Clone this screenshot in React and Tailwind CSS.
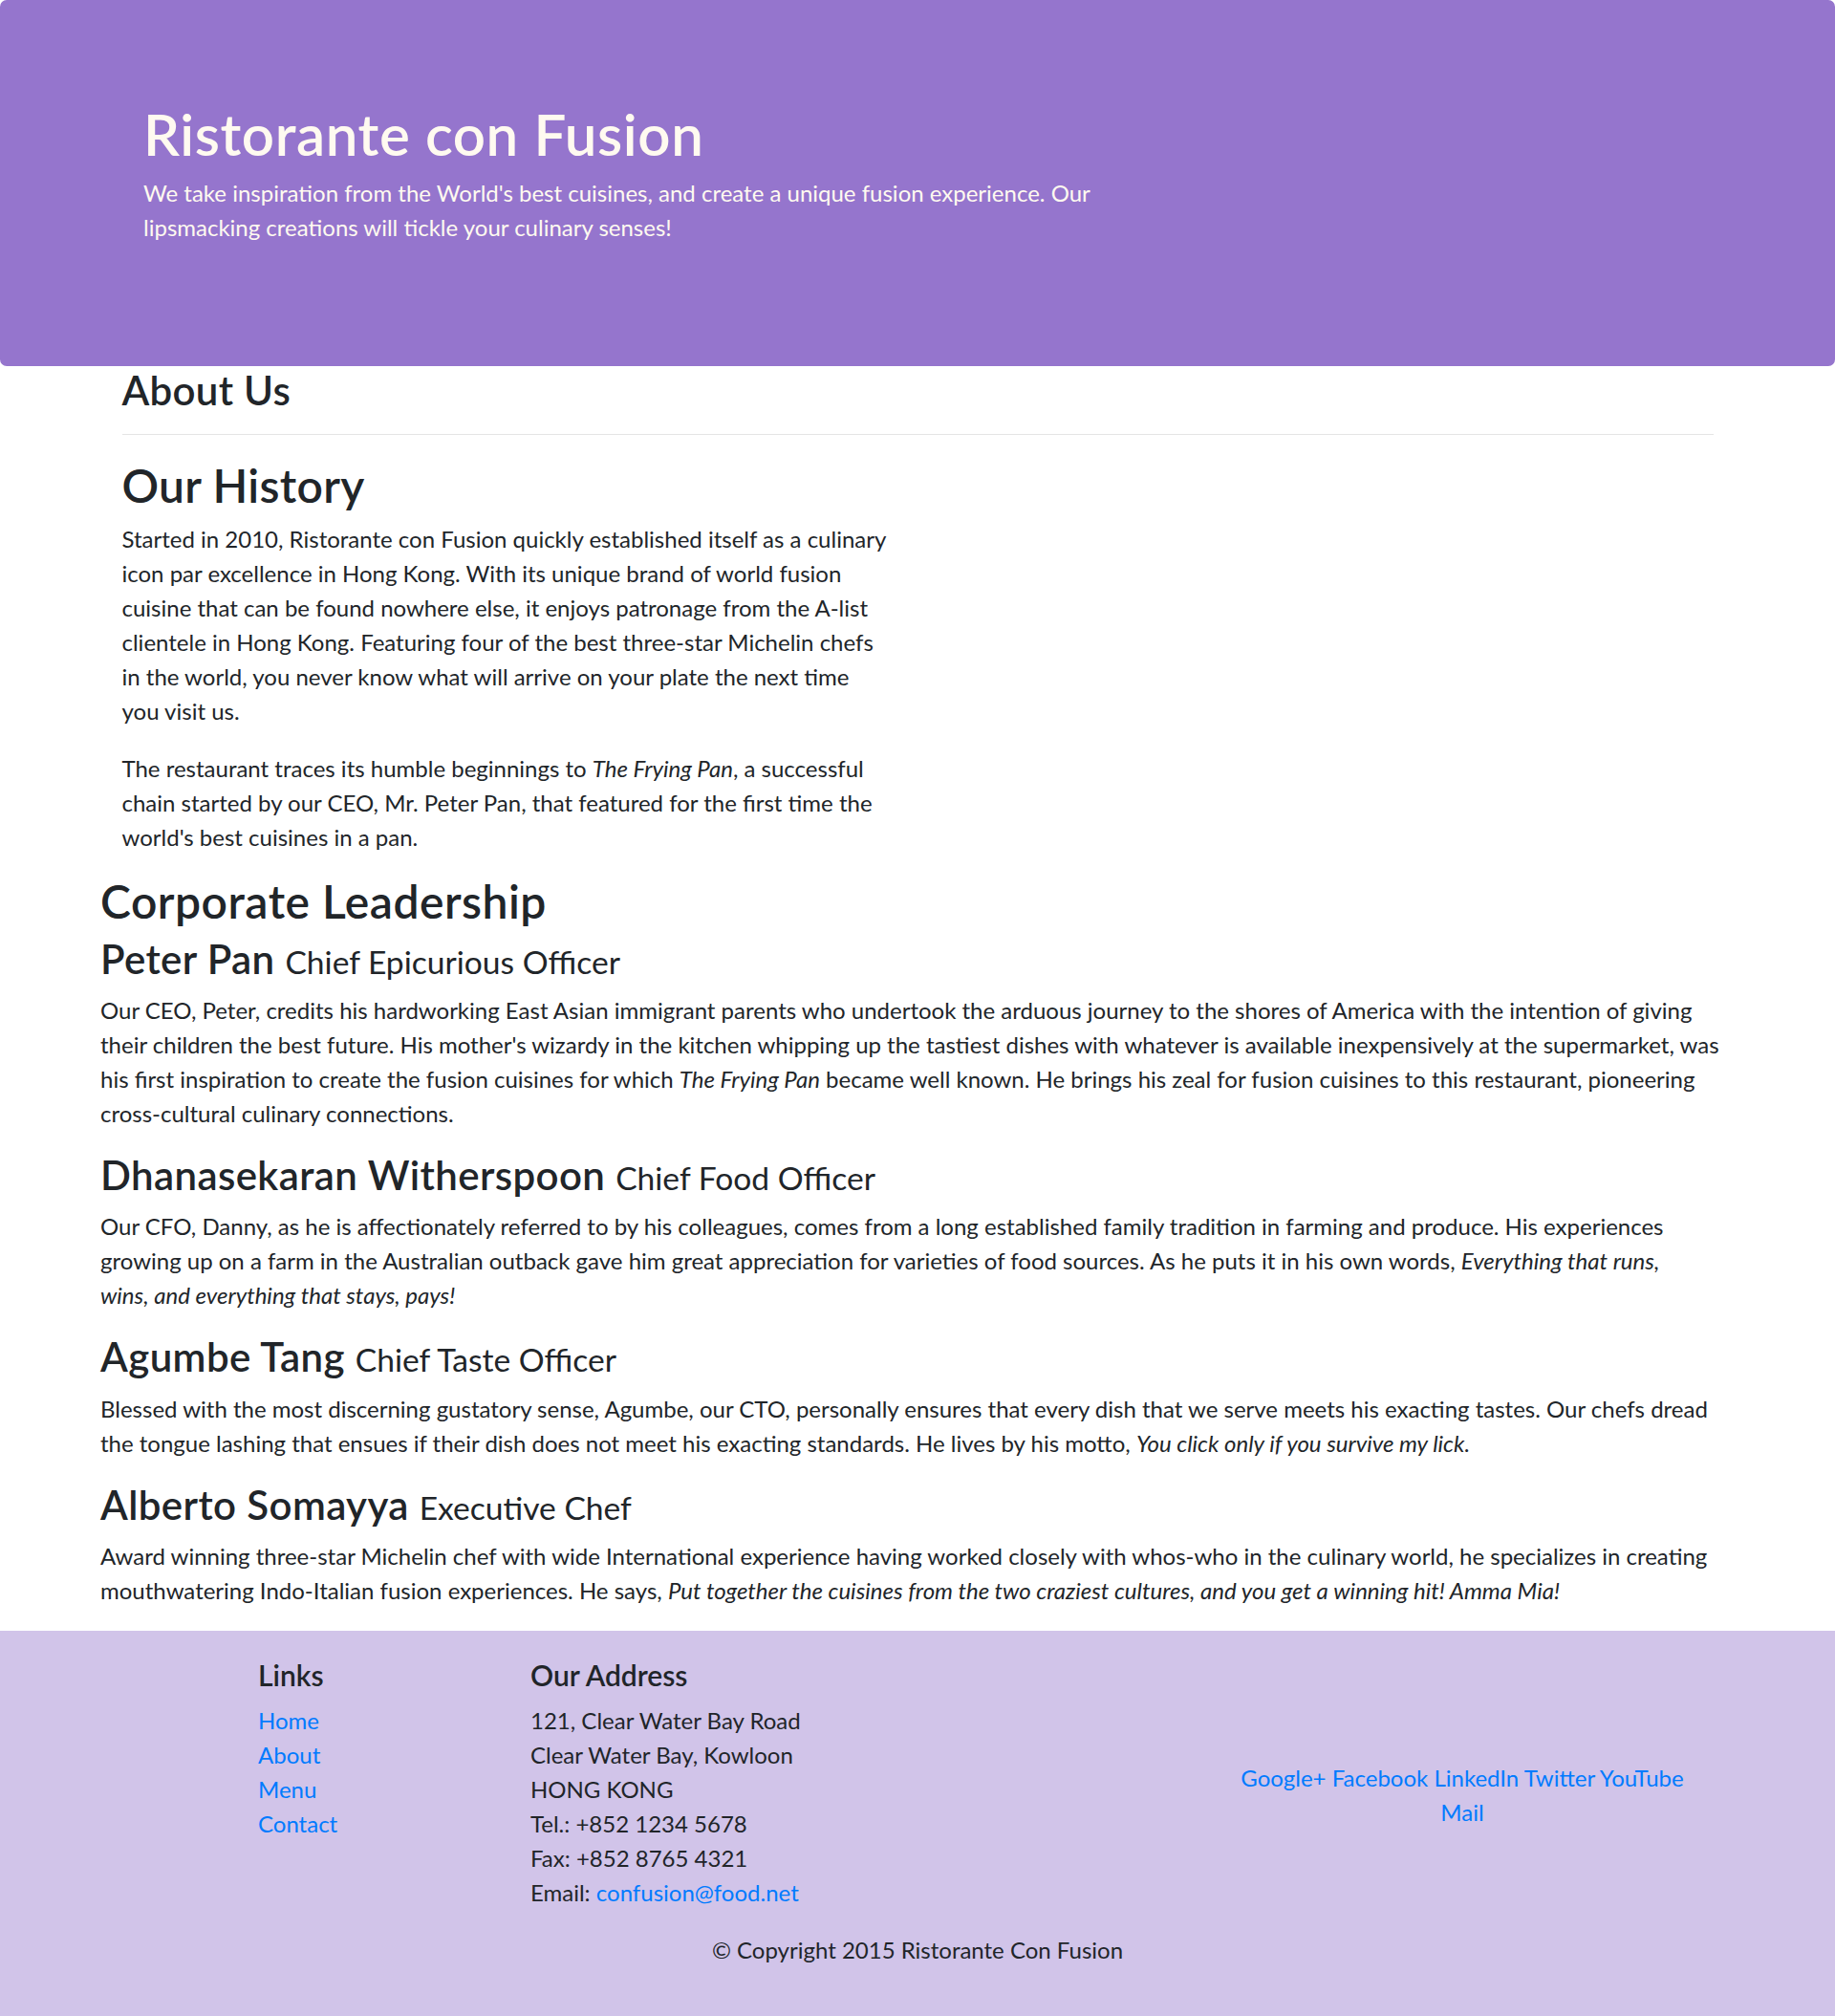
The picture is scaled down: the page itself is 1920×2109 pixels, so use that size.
import React from "react";

const leaders = [
  {
    name: "Peter Pan",
    title: "Chief Epicurious Officer",
    text: (
      <>
        Our CEO, Peter, credits his hardworking East Asian immigrant parents who undertook the arduous journey to the
        shores of America with the intention of giving their children the best future. His mother's wizardy in the
        kitchen whipping up the tastiest dishes with whatever is available inexpensively at the supermarket, was his
        first inspiration to create the fusion cuisines for which <em>The Frying Pan</em> became well known. He brings
        his zeal for fusion cuisines to this restaurant, pioneering cross-cultural culinary connections.
      </>
    ),
  },
  {
    name: "Dhanasekaran Witherspoon",
    title: "Chief Food Officer",
    narrow: true,
    text: (
      <>
        Our CFO, Danny, as he is affectionately referred to by his colleagues, comes from a long established family
        tradition in farming and produce. His experiences growing up on a farm in the Australian outback gave him great
        appreciation for varieties of food sources. As he puts it in his own words,{" "}
        <em>Everything that runs, wins, and everything that stays, pays!</em>
      </>
    ),
  },
  {
    name: "Agumbe Tang",
    title: "Chief Taste Officer",
    text: (
      <>
        Blessed with the most discerning gustatory sense, Agumbe, our CTO, personally ensures that every dish that we
        serve meets his exacting tastes. Our chefs dread the tongue lashing that ensues if their dish does not meet his
        exacting standards. He lives by his motto, <em>You click only if you survive my lick.</em>
      </>
    ),
  },
  {
    name: "Alberto Somayya",
    title: "Executive Chef",
    text: (
      <>
        Award winning three-star Michelin chef with wide International experience having worked closely with whos-who
        in the culinary world, he specializes in creating mouthwatering Indo-Italian fusion experiences. He says,{" "}
        <em>Put together the cuisines from the two craziest cultures, and you get a winning hit! Amma Mia!</em>
      </>
    ),
  },
];

const links = ["Home", "About", "Menu", "Contact"];
const socials = ["Google+", "Facebook", "LinkedIn", "Twitter", "YouTube", "Mail"];

export default function App() {
  return (
    <div className="min-h-screen bg-white text-[#212529] font-[Lato,sans-serif] text-[24px] leading-[36px]">
      {/* Jumbotron */}
      <header className="h-[383px] rounded-[7px] bg-[#9575cd] pt-[104px] pl-[150px] text-[#fffaf0]">
        <div className="w-[1095px]">
          <h1 className="mb-[8px] text-[60px] leading-[72px] font-semibold tracking-[0.6px]">Ristorante con Fusion</h1>
          <p>
            We take inspiration from the World's best cuisines, and create a unique fusion experience. Our lipsmacking
            creations will tickle your culinary senses!
          </p>
        </div>
      </header>

      <main className="mx-auto w-[1710px] pb-[3px]">
        <div className="px-[22.5px]">
          <h3 className="text-[42px] leading-[50.4px] font-semibold tracking-[0.3px]">About Us</h3>
          <hr className="mt-[21px] mb-[24px] border-t-[1.5px] border-black/10" />
        </div>

        {/* Our History */}
        <section className="w-[847px] px-[22.5px]">
          <h2 className="mb-[9px] text-[48px] leading-[57.6px] font-semibold tracking-[0.3px]">Our History</h2>
          <p className="mb-[24px]">
            Started in 2010, Ristorante con Fusion quickly established itself as a culinary icon par excellence in Hong
            Kong. With its unique brand of world fusion cuisine that can be found nowhere else, it enjoys patronage from
            the A-list clientele in Hong Kong. Featuring four of the best three-star Michelin chefs in the world, you
            never know what will arrive on your plate the next time you visit us.
          </p>
          <p className="mb-[20px]">
            The restaurant traces its humble beginnings to <em>The Frying Pan</em>, a successful chain started by our
            CEO, Mr. Peter Pan, that featured for the first time the world's best cuisines in a pan.
          </p>
        </section>

        {/* Corporate Leadership */}
        <section>
          <h2 className="mb-[6px] text-[48px] leading-[57.6px] font-semibold tracking-[0.5px]">Corporate Leadership</h2>
          <dl>
            {leaders.map((l) => (
              <React.Fragment key={l.name}>
                <dt className="mb-[11px] text-[42px] leading-[1.2] font-semibold tracking-[0.4px]">
                  {l.name} <small className="text-[80%] font-normal tracking-normal">{l.title}</small>
                </dt>
                <dd className={l.narrow ? "mb-[21px] pr-[30px]" : "mb-[21px]"}>{l.text}</dd>
              </React.Fragment>
            ))}
          </dl>
        </section>
      </main>

      {/* Footer */}
      <footer className="bg-[#d1c4e9] pt-[28px] pb-[30px]">
        <div className="mx-auto w-[1710px]">
          <div className="flex">
            <div className="ml-[142.5px] w-[285px] px-[22.5px]">
              <h5 className="mb-[11.5px] text-[30px] leading-[36px] font-semibold">Links</h5>
              <ul>
                {links.map((l) => (
                  <li key={l}>
                    <a href="#" className="text-[#007bff]">
                      {l}
                    </a>
                  </li>
                ))}
              </ul>
            </div>
            <div className="w-[712.5px] px-[22.5px]">
              <h5 className="mb-[11.5px] text-[30px] leading-[36px] font-semibold">Our Address</h5>
              <address className="mb-[24px] not-italic">
                121, Clear Water Bay Road
                <br />
                Clear Water Bay, Kowloon
                <br />
                HONG KONG
                <br />
                Tel.: +852 1234 5678
                <br />
                Fax: +852 8765 4321
                <br />
                Email:{" "}
                <a href="#" className="text-[#007bff]">
                  confusion@food.net
                </a>
              </address>
            </div>
            <div className="w-[570px] self-center px-[22.5px] text-center">
              <div className="mx-auto max-w-[490px]">
                {socials.map((s, i) => (
                  <React.Fragment key={s}>
                    <a href="#" className="text-[#007bff]">
                      {s}
                    </a>
                    {i < socials.length - 1 ? " " : null}
                  </React.Fragment>
                ))}
              </div>
            </div>
          </div>
          <p className="mb-[24px] text-center">© Copyright 2015 Ristorante Con Fusion</p>
        </div>
      </footer>
    </div>
  );
}
